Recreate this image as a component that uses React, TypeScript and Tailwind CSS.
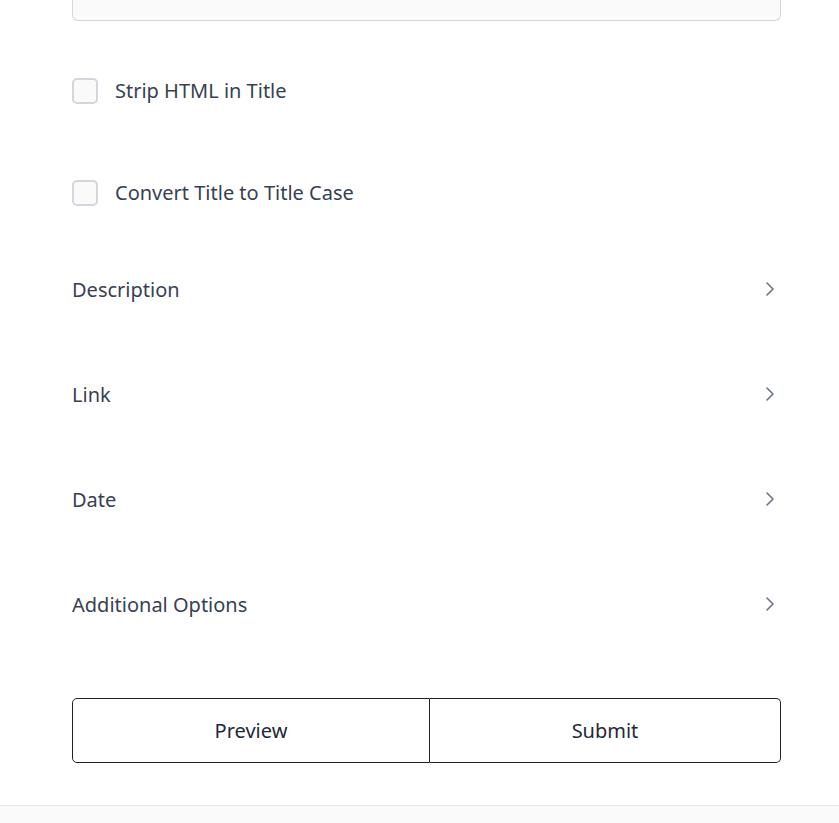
import React from "react";

const font = { fontFamily: '"Noto Sans", "Open Sans", sans-serif' };

function Chevron() {
  return (
    <svg width="10" height="16" viewBox="0 0 10 16" fill="none" className="text-[#6b7280]">
      <path d="M2 2 L8 8 L2 14" stroke="currentColor" strokeWidth="1.6" strokeLinecap="round" strokeLinejoin="round" />
    </svg>
  );
}

function CheckRow({ label }: { label: string }) {
  return (
    <label className="flex items-center h-[26px] gap-[17px]">
      <span className="w-[26px] h-[26px] rounded-[5px] border-2 border-[#d4d6dd] bg-[#fafafa] shrink-0" />
      <span className="text-[20px] text-[#374151] leading-none">{label}</span>
    </label>
  );
}

function AccRow({ label }: { label: string }) {
  return (
    <div className="flex items-center justify-between h-[105px] pr-[6px]">
      <span className="text-[20px] text-[#374151] leading-none pt-[2px]">{label}</span>
      <Chevron />
    </div>
  );
}

export default function App() {
  return (
    <div className="w-[839px] h-[823px] bg-white overflow-hidden flex flex-col" style={font}>
      <div className="px-[72px] pr-[58px] flex flex-col">
        <div className="h-[21px] border-x border-b border-[#d4d6dd] rounded-b-[6px] bg-[#fafafa]" />
        <div className="mt-[57px]">
          <CheckRow label="Strip HTML in Title" />
        </div>
        <div className="mt-[76px]">
          <CheckRow label="Convert Title to Title Case" />
        </div>
        <div className="mt-[30px] flex flex-col">
          <AccRow label="Description" />
          <AccRow label="Link" />
          <AccRow label="Date" />
          <AccRow label="Additional Options" />
        </div>
        <div className="mt-[42px] flex h-[65px]">
          <button className="w-[358px] h-full border border-[#222] rounded-l-[5px] text-[20px] text-[#1f2937]">Preview</button>
          <button className="flex-1 h-full border border-l-0 border-[#222] rounded-r-[5px] text-[20px] text-[#1f2937]">Submit</button>
        </div>
      </div>
      <div className="mt-[42px] flex-1 border-t border-[#e5e7eb] bg-[#fafafa]" />
    </div>
  );
}
